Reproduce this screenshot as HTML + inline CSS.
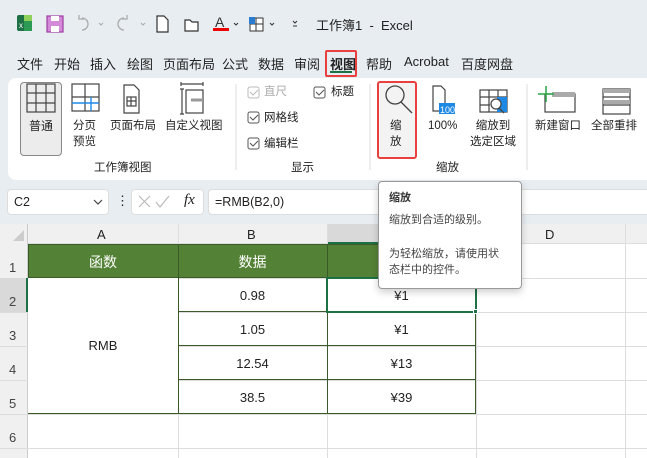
<!DOCTYPE html>
<html><head><meta charset="utf-8"><style>
*{margin:0;padding:0;box-sizing:border-box}
body{width:647px;height:458px;overflow:hidden;background:#e8edf1;font-family:"Liberation Sans","Noto Sans CJK SC",sans-serif;color:#222;position:relative;font-size:12px}
.a{position:absolute}
.t{position:absolute;white-space:nowrap}
.menu{top:54px;font-size:13px}
.lbl{font-size:11.5px;text-align:center;line-height:16px}
.cell{position:absolute;text-align:center;font-size:13px}
.rn{position:absolute;left:9px;font-size:13px;color:#444}
</style></head><body>
<svg class="a" style="left:0;top:0" width="320" height="45">
<rect x="17" y="15" width="14" height="16" rx="2" fill="#1e7145"/><rect x="24" y="15" width="8" height="6" fill="#8dd05a"/><rect x="24" y="21" width="8" height="10" fill="#2c9a55"/><text x="19" y="28" font-size="8" fill="#fff" font-family="Liberation Sans">x</text>
<rect x="47" y="16" width="16" height="16" fill="#d48ad8" stroke="#9b3ea1" stroke-width="1.2"/><rect x="51" y="16" width="8" height="5" fill="#fff"/><rect x="51" y="26" width="8" height="6" fill="#fff"/>
<path d="M82 18 a6 6 0 1 1 0 12" fill="none" stroke="#aaa" stroke-width="1.3"/><path d="M79 15 v4 h5" fill="none" stroke="#aaa" stroke-width="1.3"/>
<path d="M124 18 a6 6 0 1 0 0 12" fill="none" stroke="#aaa" stroke-width="1.3"/><path d="M127 15 v4 h-5" fill="none" stroke="#aaa" stroke-width="1.3"/>
<path d="M99 23l2 2 2-2M141 23l2 2 2-2" fill="none" stroke="#aaa"/>
<path d="M157 16 h7 l4 4 v12 h-11z" fill="#fff" stroke="#333" stroke-width="1.2"/>
<path d="M185 20 h5 l2 2 h6 v9 h-13z" fill="#fff" stroke="#333" stroke-width="1.2"/>
<text x="215" y="27" font-size="14" fill="#333" font-family="Liberation Sans">A</text><rect x="213" y="28" width="16" height="3" fill="#e00"/>
<rect x="250" y="18" width="13" height="13" fill="#fff" stroke="#333"/><path d="M250 24h13M256 18v13" stroke="#333"/><rect x="249" y="17" width="6" height="7" fill="#2b7bd0"/>
<path d="M234 23l2 2 2-2M270 23l2 2 2-2M293 21l2 2 2-2M293 26h4" fill="none" stroke="#333"/>
</svg>
<div class="t" style="left:316px;top:15px;font-size:13px">工作簿1&nbsp; -&nbsp; Excel</div>
<div class="t menu" style="left:17px">文件</div>
<div class="t menu" style="left:54px">开始</div>
<div class="t menu" style="left:90px">插入</div>
<div class="t menu" style="left:127px">绘图</div>
<div class="t menu" style="left:163px">页面布局</div>
<div class="t menu" style="left:222px">公式</div>
<div class="t menu" style="left:258px">数据</div>
<div class="t menu" style="left:294px">审阅</div>
<div class="t menu" style="left:330px;font-weight:bold">视图</div>
<div class="a" style="left:325px;top:50px;width:32px;height:27px;border:2px solid #e8403f;border-radius:2px"></div>
<div class="a" style="left:330px;top:71px;width:22px;height:2px;background:#1e7145"></div>
<div class="t menu" style="left:366px">帮助</div>
<div class="t menu" style="left:404px">Acrobat</div>
<div class="t menu" style="left:461px">百度网盘</div>
<div class="a" style="left:8px;top:78px;width:650px;height:102px;background:#fff;border-radius:8px"></div>
<div class="a" style="left:20px;top:82px;width:42px;height:74px;background:#ececec;border:1px solid #888;border-radius:4px"></div>
<svg class="a" style="left:0;top:78px" width="647" height="102">
<g fill="none" stroke="#444" stroke-width="1.2">
<rect x="27" y="6" width="28" height="28"/><path d="M36 6v28M46 6v28M27 15h28M27 25h28"/>
<rect x="72" y="6" width="27" height="27"/><path d="M85 6v27M72 19h27"/>
<path d="M124 7h10l5 5v23h-15z"/><rect x="127" y="19" width="9" height="9"/><path d="M131 19v9M127 23h9"/>
<path d="M181 6h22M181 4v4M203 4v4M182 11v25M180 11h4M180 36h4"/><rect x="186" y="12" width="17" height="23"/>
<path d="M433 8h8l4 4v21h-12z" />
<rect x="480" y="12" width="27" height="22"/><path d="M489 12v22M498 12v13M480 19h27M480 27h10"/>
<rect x="545" y="16" width="30" height="18"/>
<rect x="603" y="11" width="27" height="25"/><path d="M603 19h27M603 27h27"/>
</g>
<g stroke="#1e88e5" stroke-width="1.4" fill="none"><path d="M72 25h27M91 19v14"/></g>
<rect x="497" y="19" width="10" height="15" fill="#1e88e5"/>
<circle cx="496" cy="26" r="5" fill="#fff" stroke="#444" stroke-width="1.2"/><path d="M499 30l5 5" stroke="#444" stroke-width="1.3"/>
<rect x="439" y="25" width="16" height="11" fill="#1e88e5"/><text x="440" y="35" font-size="9" fill="#fff" font-family="Liberation Sans">100</text>
<rect x="552" y="14" width="23" height="5" fill="#aaa"/><path d="M546 8v16M538 16h16" stroke="#2aa745" stroke-width="1.5"/>
<rect x="603" y="11" width="27" height="4" fill="#aaa"/><rect x="603" y="22" width="27" height="4" fill="#aaa"/>
<path d="M191 22h12" stroke="#999" stroke-width="3"/>
<g stroke="#ddd"><path d="M236 6v86M370 6v86M527 6v86"/></g>
<g fill="none" stroke="#555" stroke-width="1">
<rect x="248" y="9" width="11" height="11" rx="2" stroke="#bbb"/><rect x="314" y="9" width="11" height="11" rx="2"/>
<rect x="248" y="34" width="11" height="11" rx="2"/><rect x="248" y="60" width="11" height="11" rx="2"/>
<path d="M250 14l3 3 5-5" stroke="#bbb"/><path d="M316 14l3 3 5-5"/><path d="M250 39l3 3 5-5"/><path d="M250 65l3 3 5-5"/></g>
</svg>
<div class="t lbl" style="left:29px;top:118px;font-size:12px">普通</div>
<div class="t lbl" style="left:73px;top:118px">分页<br>预览</div>
<div class="t lbl" style="left:110px;top:118px">页面布局</div>
<div class="t lbl" style="left:165px;top:118px">自定义视图</div>
<div class="t lbl" style="left:94px;top:160px">工作簿视图</div>
<div class="t lbl" style="left:264px;top:84px;color:#aaa">直尺</div>
<div class="t lbl" style="left:331px;top:84px">标题</div>
<div class="t lbl" style="left:264px;top:110px">网格线</div>
<div class="t lbl" style="left:264px;top:136px">编辑栏</div>
<div class="t lbl" style="left:291px;top:160px">显示</div>
<div class="a" style="left:377px;top:81px;width:40px;height:78px;background:#f3f3f3;border:2px solid #e8403f;border-radius:3px"></div>
<svg class="a" style="left:377px;top:81px" width="40" height="40"><circle cx="18" cy="14" r="9" fill="none" stroke="#444" stroke-width="1.3"/><path d="M24 21l11 11" stroke="#444" stroke-width="1.3"/></svg>
<div class="t lbl" style="left:390px;top:118px">缩<br>放</div>
<div class="t lbl" style="left:428px;top:118px">100%</div>
<div class="t lbl" style="left:470px;top:118px">缩放到<br>选定区域</div>
<div class="t lbl" style="left:436px;top:160px">缩放</div>
<div class="t lbl" style="left:535px;top:118px">新建窗口</div>
<div class="t lbl" style="left:591px;top:118px">全部重排</div>
<div class="a" style="left:7px;top:189px;width:102px;height:26px;background:#fff;border:1px solid #ddd;border-radius:4px"></div>
<div class="t" style="left:14px;top:195px;font-size:12.5px">C2</div>
<svg class="a" style="left:93px;top:198px" width="10" height="8"><path d="M1 2l4 4 4-4" fill="none" stroke="#444" stroke-width="1.2"/></svg>
<div class="t" style="left:116px;top:193px;font-size:13px">⋮</div>
<div class="a" style="left:131px;top:189px;width:73px;height:26px;background:#fff;border:1px solid #ddd;border-radius:4px"></div>
<svg class="a" style="left:137px;top:194px" width="40" height="16"><path d="M2 2l11 11M13 2l-11 11M19 8l4 5 9-11" fill="none" stroke="#bbb" stroke-width="1.2"/></svg>
<div class="t" style="left:184px;top:192px;font-size:15px;font-style:italic;font-family:'Liberation Serif',serif">fx</div>
<div class="a" style="left:208px;top:189px;width:450px;height:26px;background:#fff;border:1px solid #ddd;border-radius:4px"></div>
<div class="t" style="left:215px;top:195px;font-size:12.5px">=RMB(B2,0)</div>
<div class="a" style="left:0;top:224px;width:647px;height:234px;background:#fff"></div>
<div class="a" style="left:0;top:224px;width:647px;height:20px;background:#f0f0f0;border-bottom:1px solid #ddd"></div>
<div class="a" style="left:0;top:224px;width:28px;height:234px;background:#f0f0f0;border-right:1px solid #ccc"></div>
<svg class="a" style="left:10px;top:228px" width="16" height="14"><path d="M14 2v11H3z" fill="#ccc"/></svg>
<div class="a" style="left:327px;top:224px;width:149px;height:20px;background:#d9d9d9;border-bottom:2px solid #1e7145"></div>
<div class="t" style="left:97px;top:227px;font-size:13px">A</div>
<div class="t" style="left:247px;top:227px;font-size:13px">B</div>
<div class="t" style="left:545px;top:227px;font-size:13px">D</div>
<svg class="a" style="left:0;top:224px" width="647" height="234">
<g stroke="#ddd"><path d="M178.5 0v234M327.5 0v234M476.5 0v234M625.5 0v234"/>
<path d="M0 54.5h647M0 88.5h647M0 122.5h647M0 156.5h647M0 190.5h647M0 224.5h647"/></g>
</svg>
<div class="a" style="left:0;top:278px;width:28px;height:34px;background:#d9d9d9;border-right:2px solid #1e7145"></div>
<div class="rn" style="top:260px">1</div>
<div class="rn" style="top:294px">2</div>
<div class="rn" style="top:328px">3</div>
<div class="rn" style="top:362px">4</div>
<div class="rn" style="top:396px">5</div>
<div class="rn" style="top:430px">6</div>
<div class="a" style="left:28px;top:244px;width:448px;height:34px;background:#538135"></div>
<div class="cell" style="left:28px;top:252px;width:150px;color:#fff;font-size:14px">函数</div>
<div class="cell" style="left:178px;top:252px;width:149px;color:#fff;font-size:14px">数据</div>
<div class="a" style="left:28px;top:244px;width:448px;height:170px;border:1px solid #3a5a2c"></div>
<svg class="a" style="left:28px;top:244px" width="448" height="170"><g stroke="#3a5a2c"><path d="M150.5 0v170M299.5 0v170M150 67.5h298M150 101.5h298M150 135.5h298M0 33.5h448"/></g></svg>
<div class="a" style="left:28px;top:278px;width:150px;height:135px;background:#fff"></div>
<div class="cell" style="left:28px;top:338px;width:150px">RMB</div>
<div class="cell" style="left:178px;top:288px;width:149px">0.98</div>
<div class="cell" style="left:178px;top:322px;width:149px">1.05</div>
<div class="cell" style="left:178px;top:356px;width:149px">12.54</div>
<div class="cell" style="left:178px;top:390px;width:149px">38.5</div>
<div class="cell" style="left:327px;top:288px;width:149px">¥1</div>
<div class="cell" style="left:327px;top:322px;width:149px">¥1</div>
<div class="cell" style="left:327px;top:356px;width:149px">¥13</div>
<div class="cell" style="left:327px;top:390px;width:149px">¥39</div>
<div class="a" style="left:326px;top:277px;width:151px;height:36px;border:2px solid #1e7145"></div>
<div class="a" style="left:473px;top:309px;width:5px;height:5px;background:#1e7145;border:1px solid #fff"></div>
<div class="a" style="left:378px;top:181px;width:144px;height:108px;background:#fff;border:1px solid #999;border-radius:4px;box-shadow:0 3px 8px rgba(0,0,0,.2)"></div>
<div class="t" style="left:389px;top:189px;font-size:11px;font-weight:bold;color:#333">缩放</div>
<div class="t" style="left:389px;top:211px;font-size:11px;color:#444">缩放到合适的级别。</div>
<div class="t" style="left:389px;top:246px;font-size:11px;color:#444;line-height:16px">为轻松缩放，请使用状<br>态栏中的控件。</div>
</body></html>
